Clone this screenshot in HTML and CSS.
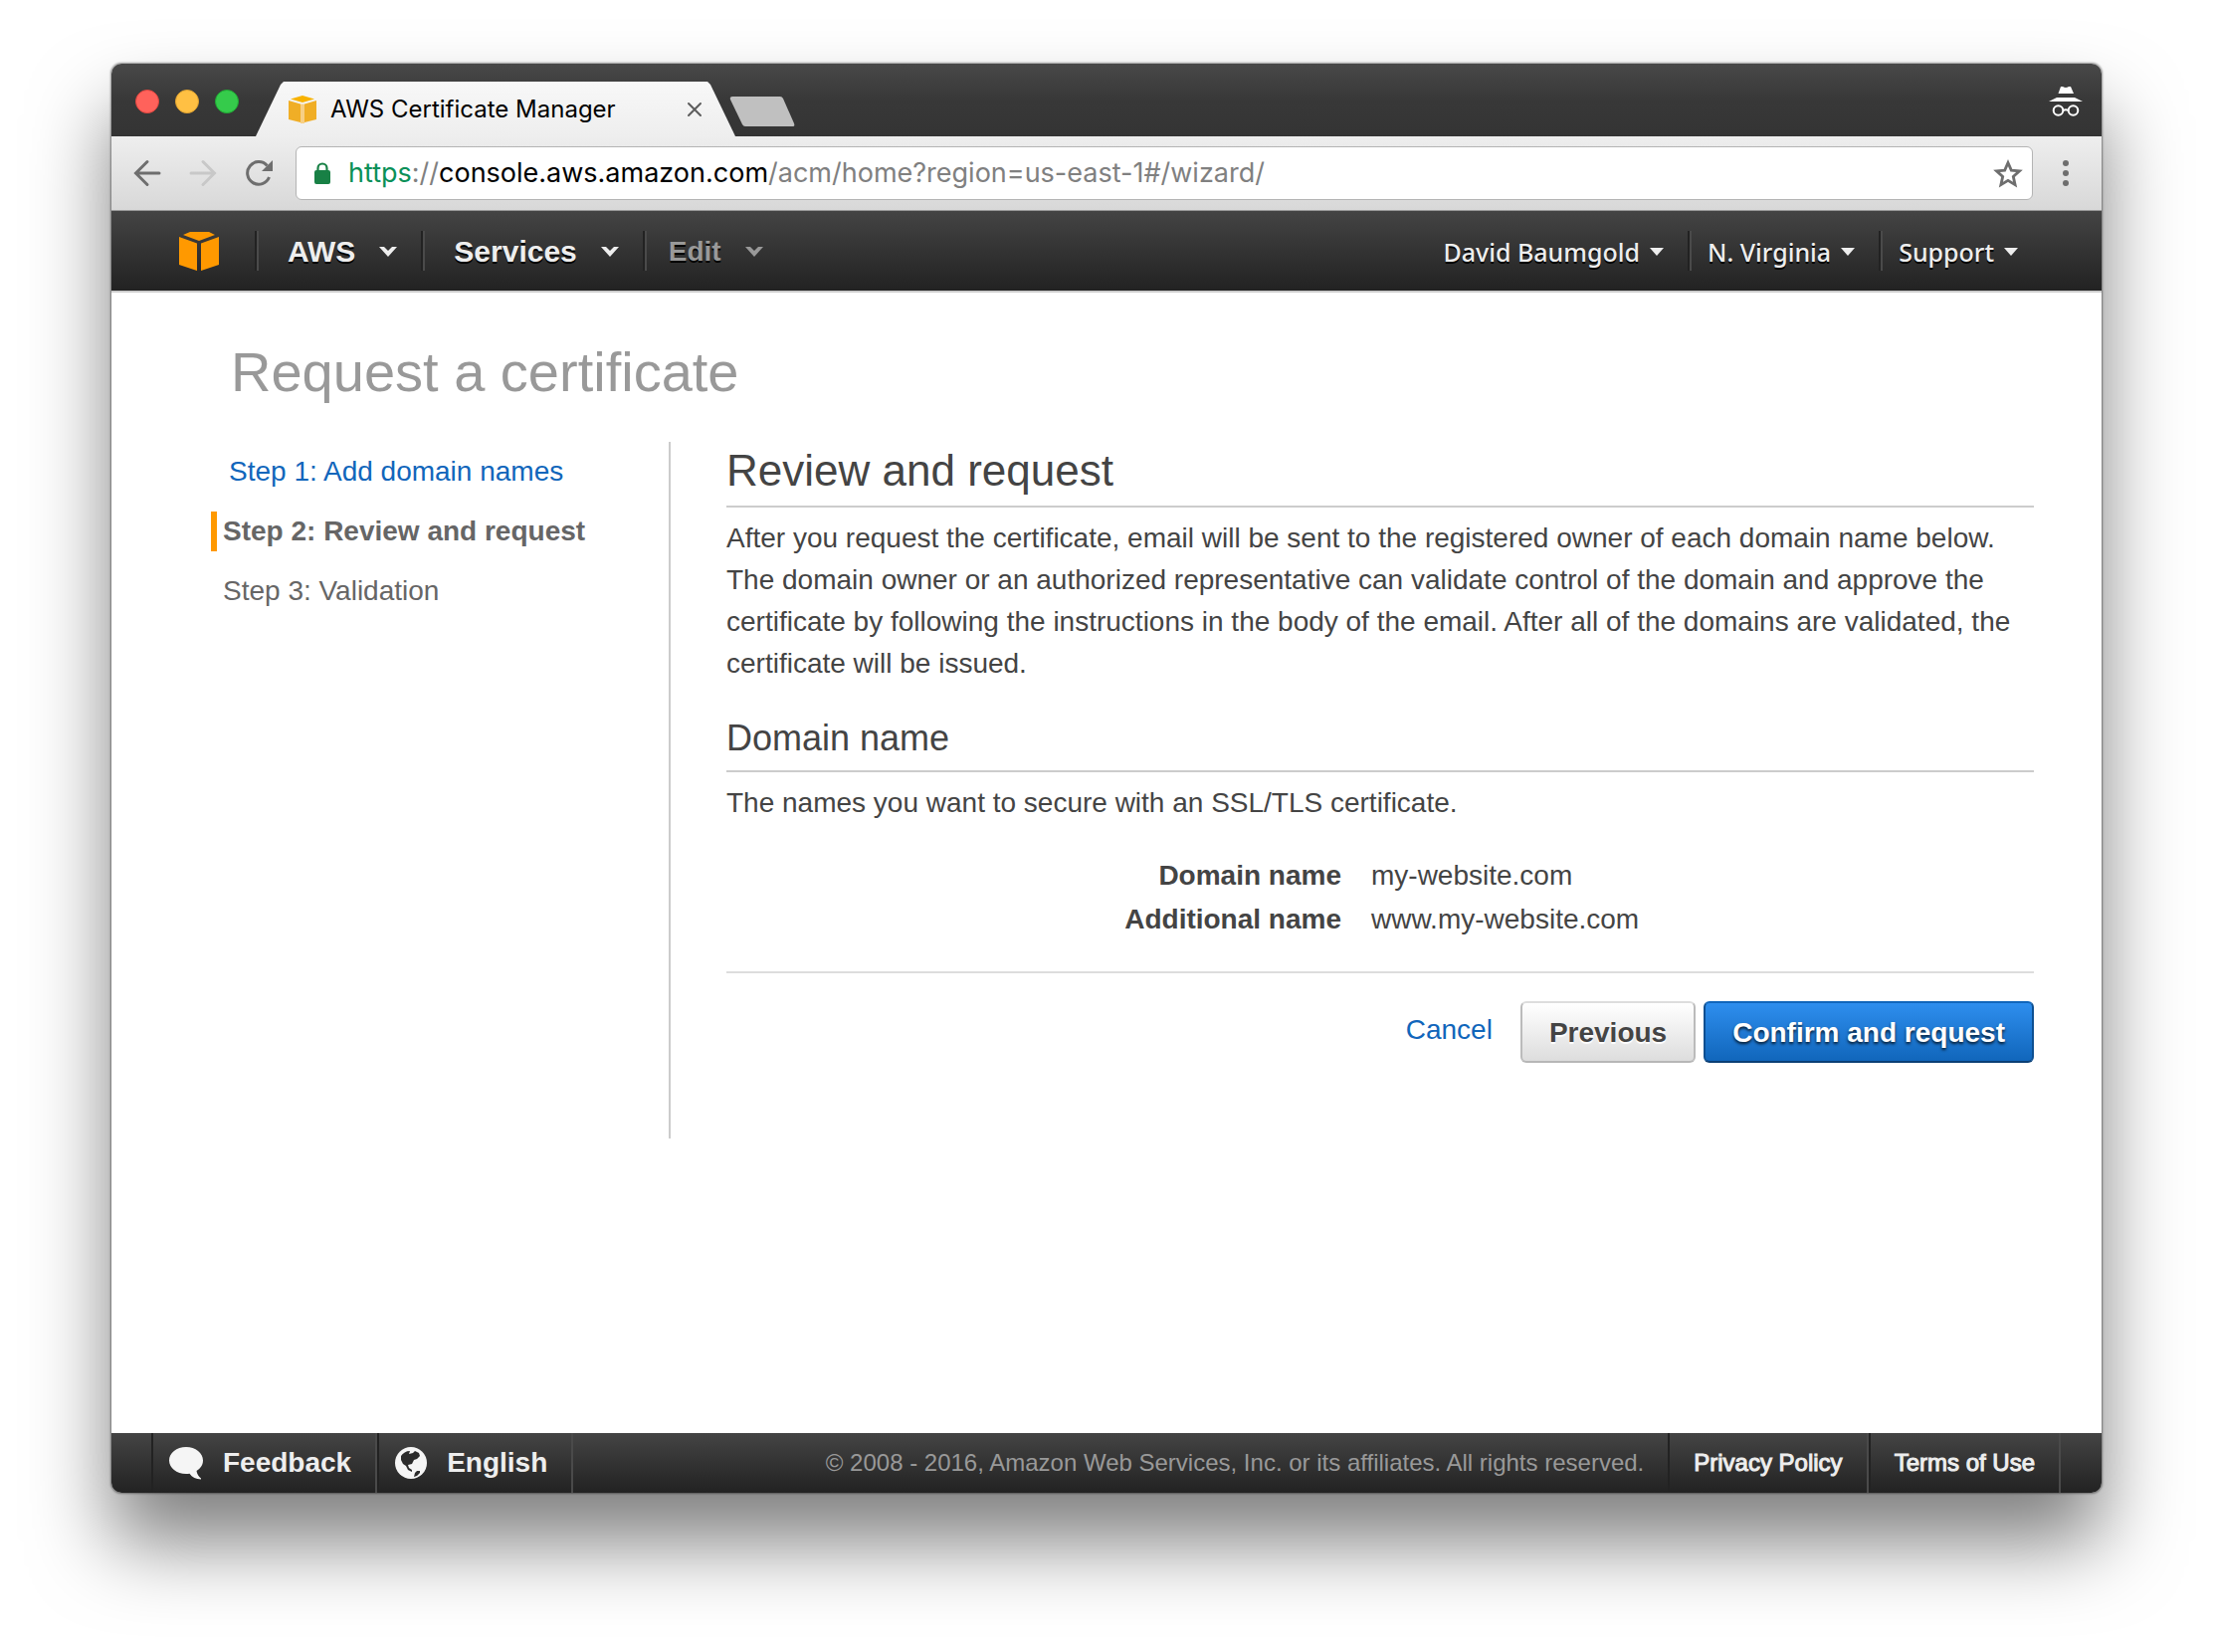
FILE: index.html
```html
<!DOCTYPE html>
<html lang="en">
<head>
<meta charset="utf-8">
<title>AWS Certificate Manager</title>
<link rel="stylesheet" href="styles.css">
</head>
<body>
<svg class="sprite" aria-hidden="true">
  <symbol id="caret" viewBox="0 0 18 10"><path d="M0 0h5l4 4 4-4h5L9 10z" fill="currentColor"/></symbol>
  <symbol id="caret-small" viewBox="0 0 14 8"><path d="M0 0h14L7 8z" fill="currentColor"/></symbol>
</svg>
<div class="window">
  <div class="titlebar">
    <div class="lights">
      <button class="light light-red" aria-label="Close window"></button>
      <button class="light light-yellow" aria-label="Minimize window"></button>
      <button class="light light-green" aria-label="Zoom window"></button>
    </div>
    <div class="tab">
      <svg class="favicon" viewBox="0 0 28 28" aria-hidden="true">
        <path d="M14 0L26 3.500L14 7L2 3.500z" fill="#f8b200"/>
        <path d="M0 5l12 3.500V27L0 24zM28 5L16 8.500V27l12-3z" fill="#f0ae26"/>
        <path d="M12 8.500h4V28h-4z" fill="#f7cf85"/>
      </svg>
      <span class="tab-title">AWS Certificate Manager</span>
      <button class="tab-close" aria-label="Close tab">
        <svg viewBox="0 0 14 14" width="14" height="14"><path d="M1 1l12 12M13 1L1 13" stroke="#5c5c5c" stroke-width="2" stroke-linecap="round"/></svg>
      </button>
    </div>
    <button class="new-tab" aria-label="New tab">
      <svg viewBox="0 0 66 32" width="66" height="32"><path d="M3 1h48q2 0 3 2l11 25q1 3-1 3H16q-2 0-3-2L1 4q-1-3 2-3z" fill="#c0c0c0"/></svg>
    </button>
    <svg class="incognito" viewBox="0 0 32 30" aria-hidden="true">
      <path d="M11 0l2 0q3 2 6 0l2 0 3 7H8.500zM7 11h18l8 4H-1z" fill="#fff"/>
      <g fill="none" stroke="#fff" stroke-width="2"><circle cx="8.500" cy="24" r="4.800"/><circle cx="23.500" cy="24" r="4.800"/><path d="M13.500 24q2.500-1.500 5 0"/></g>
    </svg>
  </div>

  <div class="toolbar">
    <button class="tool" aria-label="Back">
      <svg viewBox="0 0 28 28" width="28" height="28"><path d="M26 14H3M14 2.500L2.500 14 14 25.500" fill="none" stroke="#6e6e6e" stroke-width="3" stroke-linecap="round"/></svg>
    </button>
    <button class="tool" aria-label="Forward" disabled>
      <svg viewBox="0 0 28 28" width="28" height="28"><path d="M2 14h23M14 2.500L25.500 14 14 25.500" fill="none" stroke="#c8c8c8" stroke-width="3" stroke-linecap="round"/></svg>
    </button>
    <button class="tool" aria-label="Reload">
      <svg viewBox="0 0 28 28" width="28" height="28"><path d="M22.500 6.500A11.300 11.300 0 1 0 24.500 18" fill="none" stroke="#6e6e6e" stroke-width="3"/><path d="M28 1v11H17z" fill="#6e6e6e"/></svg>
    </button>
    <div class="address">
      <svg class="lock" viewBox="0 0 16 22" aria-hidden="true"><path d="M3.500 9V6a4.500 4.500 0 0 1 9 0v3" fill="none" stroke="#188045" stroke-width="2.200"/><rect y="8" width="16" height="14" rx="2" fill="#188045"/></svg>
      <div class="url" role="textbox" contenteditable="true" spellcheck="false" aria-label="Address"><span class="url-scheme">https</span>://<span class="url-host">console.aws.amazon.com</span>/acm/home?region=us-east-1#/wizard/</div>
      <button class="star" aria-label="Bookmark this page">
        <svg viewBox="0 0 30 28" width="30" height="28"><path d="M15 3.500l3.300 7.600 8.200.8-6.200 5.500 1.800 8.200-7.100-4.300-7.100 4.300 1.800-8.200-6.200-5.500 8.200-.8z" fill="none" stroke="#6e6e6e" stroke-width="2.800"/></svg>
      </button>
    </div>
    <button class="more" aria-label="Browser menu">
      <svg viewBox="0 0 6 26" width="6" height="26" fill="#6e6e6e"><circle cx="3" cy="3" r="3"/><circle cx="3" cy="13" r="3"/><circle cx="3" cy="23" r="3"/></svg>
    </button>
  </div>

  <nav class="nav">
    <a class="logo" href="#home" aria-label="Console home">
      <svg viewBox="0 0 40 39" width="40" height="39" fill="#ff9900"><path d="M11 0h19l6 3-16 6L4 3zM0 5l18 6.500V39L0 33zM40 5L22 11.500V39l18-6z"/></svg>
    </a>
    <button class="menu menu-main">AWS<svg class="caret"><use href="#caret"/></svg></button>
    <button class="menu menu-main">Services<svg class="caret"><use href="#caret"/></svg></button>
    <button class="menu menu-main menu-muted">Edit<svg class="caret"><use href="#caret"/></svg></button>
    <div class="account">
      <button class="menu menu-side">David Baumgold<svg class="caret-small"><use href="#caret-small"/></svg></button>
      <button class="menu menu-side">N. Virginia<svg class="caret-small"><use href="#caret-small"/></svg></button>
      <button class="menu menu-side">Support<svg class="caret-small"><use href="#caret-small"/></svg></button>
    </div>
  </nav>

  <main class="page">
    <h1 class="page-title">Request a certificate</h1>
    <div class="wizard">
      <ol class="steps">
        <li class="step step-done"><a href="#step-1">Step 1: Add domain names</a></li>
        <li class="step step-current" aria-current="step">Step 2: Review and request</li>
        <li class="step">Step 3: Validation</li>
      </ol>
      <section class="review">
        <h2 class="review-title">Review and request</h2>
        <p class="text">After you request the certificate, email will be sent to the registered owner of each domain name below. The domain owner or an authorized representative can validate control of the domain and approve the certificate by following the instructions in the body of the email. After all of the domains are validated, the certificate will be issued.</p>
        <h3 class="section-title">Domain name</h3>
        <p class="text">The names you want to secure with an SSL/TLS certificate.</p>
        <table class="names">
          <tr><th scope="row">Domain name</th><td>my-website.com</td></tr>
          <tr><th scope="row">Additional name</th><td>www.my-website.com</td></tr>
        </table>
        <div class="actions">
          <a class="cancel" href="#cancel">Cancel</a>
          <button class="btn">Previous</button>
          <button class="btn btn-primary">Confirm and request</button>
        </div>
      </section>
    </div>
  </main>

  <footer class="footer">
    <button class="foot-item foot-strong">
      <svg viewBox="0 0 34 33" width="34" height="33"><path d="M17 0c9.500 0 17 6 17 13.500 0 4.500-2.500 8-6.500 10.500.5 3 2 5.500 4.500 7.500v1c-5 0-9-2-11.500-5.700-1 .2-2.300.2-3.500.2C7.500 27 0 21 0 13.500S7.500 0 17 0z" fill="#f5f5f5"/></svg>
      Feedback
    </button>
    <button class="foot-item foot-strong">
      <svg viewBox="0 0 32 32" width="32" height="32"><circle cx="16" cy="16" r="16" fill="#f5f5f5"/><path d="M6 9c2-3 5-5 9-5l-1 3 4-1 2-2 4 2 1 3-3 3-3 1-2 4-4 1 1 3 3 2v2l-4-2-2-4-3-2-2-4zM20 26l2-2 3 0 0 2-3 3-3 1z" fill="#2b2b2b"/></svg>
      English
    </button>
    <span class="copyright">© 2008 - 2016, Amazon Web Services, Inc. or its affiliates. All rights reserved.</span>
    <a class="foot-item foot-link" href="#privacy">Privacy Policy</a>
    <a class="foot-item foot-link" href="#terms">Terms of Use</a>
  </footer>
</div>
</body>
</html>
```
FILE: styles.css
```css
* { box-sizing: border-box; }

body {
  display: flex;
  min-height: 100vh;
  margin: 0;
  padding: 64px 112px 160px;
  background: #fff;
  color: #444;
  font: 28px/42px "Liberation Sans", Arial, sans-serif;
}

h1, h2, h3, p, ol { margin: 0; padding: 0; font-weight: normal; }
ol { list-style: none; }
a { color: #1166bb; text-decoration: none; }
button { margin: 0; padding: 0; border: 0; background: none; color: inherit; font: inherit; }
svg { display: block; flex: none; overflow: visible; }

.sprite { position: absolute; width: 0; height: 0; }

.window {
  display: flex;
  flex: 1;
  flex-direction: column;
  min-width: 0;
  border-radius: 10px;
  background: #fff;
  box-shadow: 0 0 2px 1px rgba(0, 0, 0, .4), 0 50px 80px rgba(0, 0, 0, .5);
}

/* Browser chrome */
.titlebar {
  display: flex;
  align-items: flex-end;
  height: 73px;
  padding-left: 24px;
  border-radius: 10px 10px 0 0;
  background: linear-gradient(#484848, #383838 50%, #343434);
}
.lights { display: flex; gap: 16px; margin-bottom: 23px; }
.light { width: 24px; height: 24px; border: 1px solid; border-radius: 50%; }
.light-red { border-color: #e2463f; background: #ff625b; }
.light-yellow { border-color: #e1a32f; background: #ffc043; }
.light-green { border-color: #1faa33; background: #35cb4b; }

.tab {
  display: flex;
  align-items: center;
  width: 482px;
  height: 55px;
  margin-left: 17px;
  padding: 0 34px 0 33px;
  background: linear-gradient(#f8f8f8, #eee);
  clip-path: polygon(0 100%, 25px 3px, 28px 0, 454px 0, 457px 3px, 100% 100%);
}
.favicon { width: 28px; height: 28px; }
.tab-title { flex: 1; margin-left: 14px; color: #000; font: 24px/32px Inter, sans-serif; }
.new-tab { margin: 0 0 9px -6px; }
.incognito { width: 32px; height: 30px; margin: 0 20px 20px auto; }

.toolbar {
  display: flex;
  align-items: center;
  height: 75px;
  padding: 0 33px 0 22px;
  border-bottom: 1px solid #999;
  background: linear-gradient(#eee, #d8d8d8);
}
.tool { margin-right: 28px; }
.address {
  display: flex;
  flex: 1;
  align-items: center;
  height: 54px;
  margin-left: -5px;
  padding: 0 9px 0 18px;
  border: 1px solid #b4b4b4;
  border-radius: 6px;
  background: #fff;
}
.lock { width: 16px; height: 22px; }
.url { flex: 1; margin-left: 18px; color: #808080; font: 27px/36px Inter, sans-serif; white-space: nowrap; }
.url-scheme { color: #0b9058; }
.url-host { color: #000; }
.more { margin-left: 30px; }

/* Console navigation */
.nav {
  display: flex;
  align-items: center;
  height: 82px;
  padding: 0 60px 0 68px;
  border-bottom: 2px solid #ccc;
  background: linear-gradient(#444, #222);
}
.logo { margin-right: 36px; }
.menu {
  display: flex;
  align-items: center;
  height: 40px;
  padding-top: 2px;
  color: #eee;
  text-shadow: 0 2px 0 #000;
}
.menu-main {
  padding-right: 24px;
  padding-left: 31px;
  border-left: 2px solid #222;
  box-shadow: inset 2px 0 #4a4a4a;
  font-size: 30px;
  font-weight: bold;
}
.menu-muted { padding-left: 24px; color: #999; font-size: 28px; }
.caret { width: 18px; height: 10px; margin-left: 24px; }
.account { display: flex; margin-left: auto; }
.menu-side { padding-right: 24px; padding-left: 18px; font: 500 25px/38px "Noto Sans", sans-serif; }
.menu-side + .menu-side { border-left: 2px solid #222; box-shadow: inset 2px 0 #4a4a4a; }
.caret-small { width: 14px; height: 8px; margin-left: 10px; }

/* Wizard */
.page { flex: 1; padding: 48px 68px 48px 100px; }
.page-title { margin: 0 0 38px 20px; color: #999; font-size: 56px; line-height: 64px; }
.wizard { display: grid; grid-template-columns: 462px 1fr; column-gap: 56px; }
.steps { border-right: 2px solid #ccc; }
.step { margin: 10px 0 20px; padding-left: 12px; color: #666; line-height: 40px; }
.step-done { padding-left: 18px; }
.step-current { padding-left: 6px; border-left: 6px solid #ff9900; font-weight: bold; }
.review { padding-bottom: 76px; }
.review-title { padding-bottom: 6px; border-bottom: 2px solid #ccc; font-size: 44px; line-height: 58px; }
.section-title { margin-top: 30px; padding-bottom: 8px; border-bottom: 2px solid #ccc; font-size: 36px; line-height: 48px; }
.text { margin-top: 10px; }

.names { width: 100%; margin: 30px 0; border-collapse: collapse; table-layout: fixed; line-height: 44px; }
.names th { width: 633px; padding: 0 15px 0 0; font-weight: bold; text-align: right; }
.names td { padding: 0 0 0 15px; }

.actions { display: flex; justify-content: flex-end; padding-top: 28px; border-top: 2px solid #ddd; }
.cancel { margin-right: 28px; line-height: 58px; }
.btn {
  height: 62px;
  padding: 2px 27px 0;
  border: 2px solid;
  border-color: #ddd #bbb #b7b7b7;
  border-radius: 6px;
  background: linear-gradient(#fff, #ddd);
  font-weight: bold;
  text-shadow: 0 2px 1px #fff;
}
.btn-primary {
  margin-left: 8px;
  border-color: #1166bb #0d4f91 #0b3f75;
  background: linear-gradient(#2e8eee, #1166bb);
  color: #fff;
  text-shadow: 0 2px 3px rgba(0, 0, 0, .8);
}

/* Footer */
.footer {
  display: flex;
  align-items: center;
  height: 60px;
  padding: 0 41px 0 40px;
  border-radius: 0 0 10px 10px;
  background: linear-gradient(#444, #222);
  color: #999;
}
.foot-item {
  display: flex;
  align-items: center;
  height: 60px;
  border-right: 2px solid #4a4a4a;
  box-shadow: inset 2px 0 #222;
  color: #eee;
}
.foot-strong { gap: 20px; padding: 0 24px 0 18px; font-size: 28px; font-weight: bold; }
.copyright { margin-left: auto; padding-right: 24px; font-size: 24px; }
.foot-link { padding: 0 24px 0 26px; font-size: 24px; -webkit-text-stroke: 1px; }
```
